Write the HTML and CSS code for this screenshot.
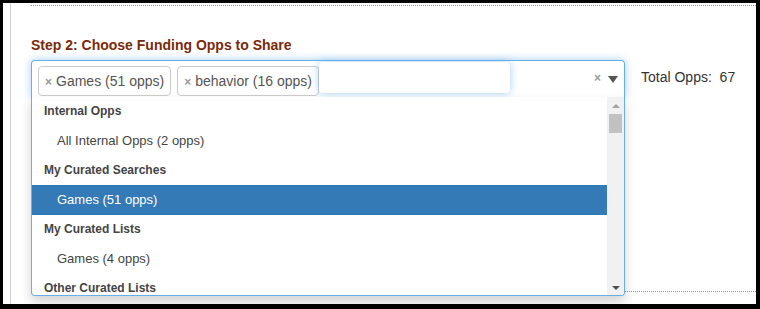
FILE: index.html
```html
<!DOCTYPE html>
<html lang="en">
<head>
    <meta charset="UTF-8">
    <title>Share Funding Opps</title>
    <link rel="stylesheet" href="styles.css">
</head>
<body>
    <div class="frame">
        <div class="rail"></div>
        <div class="panel">
            <h4 class="step-title">Step 2: Choose Funding Opps to Share</h4>
            <div class="pick-row">
                <div class="select-wrap">
                    <div class="selection">
                        <ul class="choices">
                            <li class="choice"><span class="choice-remove">×</span>Games (51 opps)</li>
                            <li class="choice"><span class="choice-remove">×</span>behavior (16 opps)</li>
                            <li class="search"><input class="search-field" type="search"></li>
                        </ul>
                        <span class="clear">×</span>
                        <span class="arrow"></span>
                    </div>
                    <div class="dropdown">
                        <ul class="results">
                            <li class="group">Internal Opps</li>
                            <li class="option">All Internal Opps (2 opps)</li>
                            <li class="group">My Curated Searches</li>
                            <li class="option highlighted">Games (51 opps)</li>
                            <li class="group">My Curated Lists</li>
                            <li class="option">Games (4 opps)</li>
                            <li class="group">Other Curated Lists</li>
                        </ul>
                        <div class="scrollbar">
                            <span class="scroll-up"></span>
                            <span class="scroll-thumb"></span>
                            <span class="scroll-down"></span>
                        </div>
                    </div>
                </div>
                <div class="total">Total Opps:&nbsp; 67</div>
            </div>
        </div>
    </div>
</body>
</html>
```

FILE: styles.css
```css
body {
    margin: 0;
    background: #000;
    font-family: "Liberation Sans", Arial, sans-serif;
}
.frame {
    display: flex;
    align-items: flex-start;
    margin: 3px 4px 5px 3px;
    height: 301px;
    background: #fff;
}
.rail {
    width: 1px;
    height: 100%;
    margin-left: 7px;
    background: #d0d0d0;
}
.panel {
    flex: 1;
    box-sizing: border-box;
    height: 287px;
    margin: 2px 0 0 20px;
    padding-top: 29px;
    border-top: 1px dotted #999;
    border-bottom: 1px dotted #999;
}
.step-title {
    margin: 0 0 5px;
    font-size: 14px;
    line-height: 20px;
    font-weight: bold;
    color: #7a2a0b;
}
.pick-row {
    display: flex;
    align-items: flex-start;
    gap: 16px;
}
.select-wrap {
    position: relative;
    width: 594px;
}
.selection {
    display: flex;
    align-items: flex-start;
    box-sizing: border-box;
    height: 37px;
    padding: 5px 6px 0;
    border: 1px solid #66afe9;
    border-bottom: none;
    border-radius: 4px 4px 0 0;
    box-shadow: 0 0 8px rgba(102,175,233,.6);
    background: #fff;
}
.choices {
    display: flex;
    flex: 1;
    margin: 0;
    padding: 0;
    list-style: none;
}
.choice {
    height: 28px;
    margin-right: 6px;
    padding: 0 6px;
    border: 1px solid #ccc;
    border-radius: 4px;
    font-size: 14px;
    line-height: 28px;
    color: #555;
    white-space: nowrap;
}
.choice:nth-child(2) { margin-right: 0; }
.choice-remove {
    margin-right: 4px;
    font-size: 12px;
    font-weight: bold;
    color: #999;
}
.search { margin-top: -4px; }
.search-field {
    box-sizing: border-box;
    width: 191px;
    height: 31px;
    border: none;
    border-radius: 4px;
    outline: none;
    background: #fff;
    box-shadow: 0 0 8px rgba(102,175,233,.6);
}
.clear {
    margin: 5px 7px 0 0;
    font-size: 12px;
    font-weight: bold;
    line-height: 14px;
    color: #999;
}
.arrow {
    width: 0;
    height: 0;
    margin-top: 10px;
    border-left: 5px solid transparent;
    border-right: 5px solid transparent;
    border-top: 7px solid #555;
}
.dropdown {
    position: absolute;
    top: 37px;
    left: 0;
    z-index: 10;
    display: flex;
    box-sizing: border-box;
    width: 594px;
    height: 199px;
    border: 1px solid #66afe9;
    border-top: none;
    border-radius: 0 0 4px 4px;
    background: #fff;
    box-shadow: 0 6px 12px rgba(0,0,0,.175);
    overflow: hidden;
}
.results {
    flex: 1;
    margin: 0;
    padding: 0;
    list-style: none;
    overflow: hidden;
}
.group {
    height: 29px;
    padding-left: 12px;
    font-size: 12px;
    font-weight: bold;
    line-height: 29px;
    color: #444;
}
.option {
    height: 30px;
    padding-left: 25px;
    font-size: 13px;
    line-height: 30px;
    color: #444;
}
.highlighted {
    background: #337ab7;
    color: #fff;
}
.scrollbar {
    display: flex;
    flex-direction: column;
    align-items: center;
    width: 17px;
    background: #f1f1f1;
}
.scroll-up {
    width: 0;
    height: 0;
    margin-top: 7px;
    border-left: 4px solid transparent;
    border-right: 4px solid transparent;
    border-bottom: 4px solid #a3a3a3;
}
.scroll-thumb {
    width: 13px;
    height: 19px;
    margin-top: 6px;
    background: #c1c1c1;
}
.scroll-down {
    width: 0;
    height: 0;
    margin: auto 0 5px;
    border-left: 4px solid transparent;
    border-right: 4px solid transparent;
    border-top: 4px solid #505050;
}
.total {
    margin-top: 7px;
    font-size: 14px;
    line-height: 20px;
    color: #333;
    white-space: nowrap;
}
```
